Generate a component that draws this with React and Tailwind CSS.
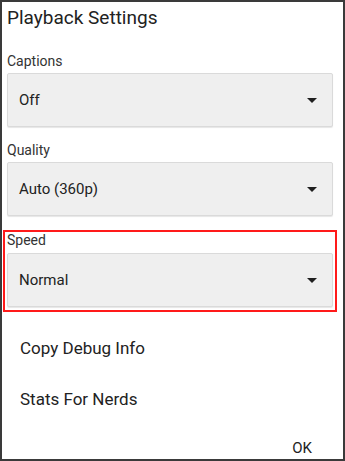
import React from "react";

function Arrow() {
  return (
    <svg width="10" height="5" viewBox="0 0 10 5" className="block">
      <path d="M0 0 L10 0 L5 5 Z" fill="#1f1f1f" />
    </svg>
  );
}

function Select({ value }) {
  return (
    <div className="h-[54px] flex items-center justify-between pl-[11px] pr-[15px] bg-[#efefef] border border-[#dadada] rounded-[2px] shadow-[0_1px_1px_rgba(0,0,0,0.10)] text-[15px] leading-[20px] text-[#222]">
      <span>{value}</span>
      <Arrow />
    </div>
  );
}

export default function App() {
  return (
    <div
      className="w-[345px] h-[461px] border-2 border-[#3a3a3a] bg-white flex flex-col text-[#212121]"
      style={{ fontFamily: "Roboto, 'Noto Sans', sans-serif" }}
    >
      <div className="pl-[5px] mt-[4px] text-[19px] leading-[24px] text-[#222]">Playback Settings</div>

      <div className="pl-[5px] pr-[10px] mt-[21px]">
        <div className="text-[14px] leading-[20px] text-[#333]">Captions</div>
        <div className="mt-[2px]">
          <Select value="Off" />
        </div>
      </div>

      <div className="pl-[5px] pr-[10px] mt-[13px]">
        <div className="text-[14px] leading-[20px] text-[#333]">Quality</div>
        <div className="mt-[2px]">
          <Select value="Auto (360p)" />
        </div>
      </div>

      <div className="ml-[1px] mr-[6px] mt-[14px] border-2 border-[#ff1a1a] pl-[2px] pr-[2px] pb-[3px]">
        <div className="text-[14px] leading-[16px] text-[#333]">Speed</div>
        <div className="mt-[5px]">
          <Select value="Normal" />
        </div>
      </div>

      <div className="pl-[18px] mt-[26px] text-[17px] leading-[20px] text-[#222]">Copy Debug Info</div>
      <div className="pl-[18px] mt-[31px] text-[17px] leading-[20px] text-[#222]">Stats For Nerds</div>

      <div className="flex justify-end pr-[31px] mt-[29px]">
        <span className="text-[15px] leading-[20px] text-[#222]">OK</span>
      </div>
    </div>
  );
}
